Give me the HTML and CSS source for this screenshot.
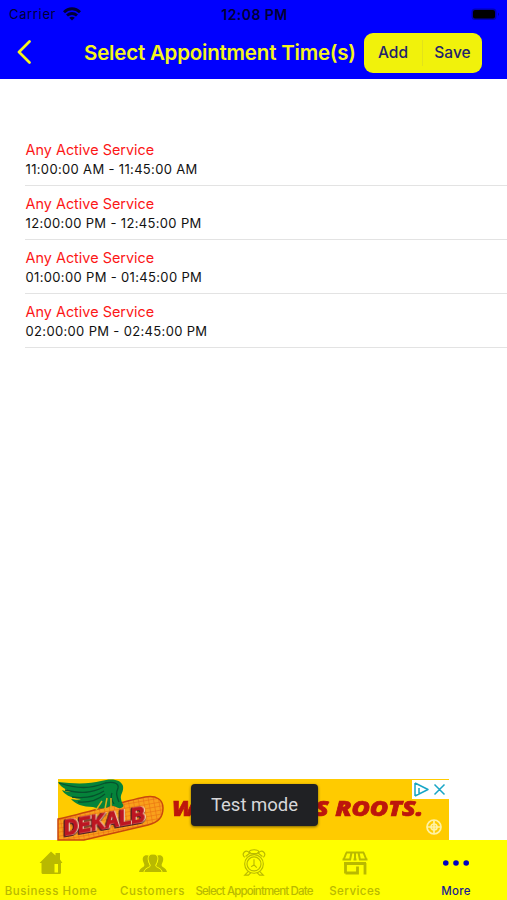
FILE: index.html
```html
<!DOCTYPE html>
<html lang="en">
<head>
<meta charset="utf-8">
<meta name="viewport" content="width=device-width">
<title>Select Appointment Time(s)</title>
<link rel="stylesheet" href="styles.css">
</head>
<body>
<header class="header">
  <div class="status">
    <div class="carrier"><span>Carrier</span>
      <svg width="18" height="14" viewBox="0 0 18 14"><g fill="none" stroke="currentColor" stroke-width="2.8"><path d="M1 5.2C5.5.6 12.500.6 17 5.200"/><path d="M4 8.500c2.800-2.700 7.200-2.700 10 0"/></g><path d="M9 13.500L6.200 10.800c1.600-1.500 4-1.500 5.600 0z" fill="currentColor"/></svg>
    </div>
    <time class="clock">12:08 PM</time>
    <svg class="battery" width="29" height="13" viewBox="0 0 29 13"><rect x=".5" y=".5" width="25" height="11.500" rx="3.500" fill="#0000b4"/><rect x="2" y="2" width="22" height="8.500" rx="2" fill="#000"/><path d="M27 4.500q2 1.700 0 3.500z" fill="#0000a0"/></svg>
  </div>
  <div class="nav">
    <button class="back" aria-label="Back"><svg width="14" height="24" viewBox="0 0 14 24"><path d="M12.500 1.500L2 12l10.500 10.500" fill="none" stroke="currentColor" stroke-width="2.700" stroke-linecap="round" stroke-linejoin="round"/></svg></button>
    <h1 class="title">Select Appointment Time(s)</h1>
    <div class="actions"><button class="add">Add</button><button class="save">Save</button></div>
  </div>
</header>
<main class="content">
  <ul class="slots">
    <li class="slot"><div class="name">Any Active Service</div><div class="time">11:00:00 AM - 11:45:00 AM</div></li>
    <li class="slot"><div class="name">Any Active Service</div><div class="time">12:00:00 PM - 12:45:00 PM</div></li>
    <li class="slot"><div class="name">Any Active Service</div><div class="time">01:00:00 PM - 01:45:00 PM</div></li>
    <li class="slot"><div class="name">Any Active Service</div><div class="time">02:00:00 PM - 02:45:00 PM</div></li>
  </ul>
</main>
<aside class="ad">
  <svg class="ad-logo" width="107" height="61" viewBox="0 0 107 61">
    <defs><pattern id="kernels" width="5" height="4" patternUnits="userSpaceOnUse" patternTransform="rotate(-10)"><rect width="5" height="4" fill="#f9a01b"/><path d="M0 0H5M0 0V4" stroke="#e8690f" stroke-width="1"/></pattern></defs>
    <path d="M0 40C28 34 63 23 87 18c12-2 18 3 18 11 0 9-4 14-15 17C68 51 48 56 26 61H0z" fill="url(#kernels)" stroke="#c9480c" stroke-width="1.500"/>
    <path d="M0 3c17 2 32 2 43-1 10-3 20-2 22 5 1 6-3 8-2 13 1 6 5 7 0 9-4 1-8-4-11-2-6 4-14 2-17 1-10 0-18-3-22-8 5 1 8 1 10 0C12 19 6 15 4 11c5 2 8 2 11 2C7 11 2 7 0 3z" fill="#05833a"/>
    <path d="M1 4c19 6 31 6 46 0M7 11c17 4 26 3 39-3M14 18c14 2 23 0 32-6M20 23c12 1 20-2 27-8M47 4c10-2 14 1 13 5-2 5-2 7 1 14M54 14c-2 4 0 8 2 11" fill="none" stroke="#06512d" stroke-width="1.300"/>
    <path d="M49 19l-2 11M53 19v10M44 22l-6 9" stroke="#d7b319" stroke-width="1.500"/>
    <text class="brand" transform="translate(6 56.500) skewY(-10)" textLength="81" lengthAdjust="spacingAndGlyphs">DEKALB</text>
  </svg>
  <span class="slogan-start">W</span>
  <span class="slogan-end">S ROOTS.</span>
  <svg class="ad-controls" width="37" height="19" viewBox="0 0 37 19"><rect width="37" height="19" fill="#fff"/><g fill="none" stroke="#19a6c6" stroke-width="1.500" stroke-linejoin="round"><path d="M3 3v13M3 3l13 6.500L3 16M7 8v6M7 5v1M22.500 4.500l10 10M32.500 4.500l-10 10"/></g></svg>
  <svg class="ad-mark" width="16" height="16" viewBox="0 0 16 16"><g fill="none" stroke="#fff2a5" stroke-width="1.700"><circle cx="8" cy="8" r="7"/><path d="M1 8h14M8 1v14"/><circle cx="8" cy="8" r="3"/></g></svg>
  <div class="toast">Test mode</div>
</aside>
<nav class="tabs">
  <a class="tab home"><svg viewBox="0 0 28 28"><path d="M2.500 14L14 2.500l4.500 4V4H23v6.500l2.500 3.500H24v9.500q0 1.500-1.500 1.500H6Q4.500 25 4.500 23.500V14zM17.500 15v8.500h3.500V15z" fill="currentColor" fill-rule="evenodd"/></svg><span>Business Home</span></a>
  <a class="tab customers"><svg viewBox="0 0 28 28"><g fill="currentColor"><path id="person" d="M9 6.500C5 5.500 3 8.500 4 12c.4 2 1.700 3 1.300 4.500C5 18.500 1 18.500 0 23h7c.5-3 3-4.500 5-5.500-3.200-3-3.300-7-1-10.500z"/><use href="#person" transform="matrix(-1 0 0 1 28 0)"/><path d="M14 5c-4.500 0-5.500 3.500-4.500 7 .4 2.100 1.800 3.300 1.700 4.800-.2 2-5.700 1.700-6.400 6.700h18.400c-.7-5-6.200-4.700-6.400-6.700-.1-1.500 1.300-2.700 1.700-4.800 1-3.500 0-7-4.500-7z" stroke="#ff0" stroke-width="1"/></g></svg><span>Customers</span></a>
  <a class="tab date"><svg viewBox="0 0 28 30"><g fill="none" stroke="currentColor" stroke-width="1.200"><circle cx="14" cy="16" r="10"/><circle cx="14" cy="16" r="7.500"/><path d="M4 9C0 5 5 0 9 4M24 9c4-4-1-9-5-5M5 8l5-4M23 8l-5-4M9 3c0-3 10-3 10 0l-2 2h-6zM8 24l-4 4h4l3-3M20 24l4 4h-4l-3-3M14 11v6l3 3M14 17l-3 2"/></g></svg><span>Select Appointment Date</span></a>
  <a class="tab services"><svg viewBox="0 0 28 28"><g fill="none" stroke="currentColor" stroke-width="2"><path d="M5 3.500h18M5.500 3.500L2.500 11M22.500 3.500l3 7.500M10.500 3.500L9 11M14 3.500V11M17.500 3.500L19 11M1.500 10.500H10M12.500 10.500h3M18 10.500h8.500"/><path d="M4.500 14v10.500M3 14.500H25M24 14v11.500M4.500 24H17M16.500 25.500v-8" stroke-width="2.800"/></g></svg><span>Services</span></a>
  <a class="tab more"><svg viewBox="0 0 28 28"><g fill="currentColor"><circle cx="3.800" cy="14" r="2.800"/><circle cx="14" cy="14" r="2.800"/><circle cx="24.200" cy="14" r="2.800"/></g></svg><span>More</span></a>
</nav>
</body>
</html>
```
FILE: styles.css
```css
* { box-sizing: border-box; }
body { margin: 0; width: 507px; height: 900px; display: flex; flex-direction: column; background: #fff; color: #111; font-family: Inter, sans-serif; overflow: hidden; }
button { padding: 0; border: 0; background: none; font: inherit; color: inherit; }
.header { height: 79px; background: #00f; flex: none; }
.status { height: 28px; display: grid; grid-template-columns: 1fr auto 1fr; align-items: center; padding: 0 7px 0 9px; color: #000035; font-size: 13px; }
.carrier { display: flex; align-items: center; gap: 7px; letter-spacing: .65px; }
.clock { font-size: 14px; font-weight: 600; letter-spacing: .45px; }
.battery { justify-self: end; }
.nav { display: flex; align-items: center; height: 48px; color: #f5f51c; padding: 0 25px 0 17px; }
.back { width: 67px; height: 24px; text-align: left; }
.back svg { display: block; }
.title { margin: 1px 0 0; width: 280px; font-size: 20.500px; font-weight: 600; letter-spacing: -.2px; white-space: nowrap; }
.actions { display: flex; flex: none; width: 118px; height: 40px; margin-top: 1px; border-radius: 9px; background: #f1f20b; color: #22226c; font-size: 15.500px; font-weight: 500; letter-spacing: 0; align-items: center; }
.add { width: 59px; height: 26px; border-right: 1px solid #e2e21b; }
.save { width: 59px; }
.content { flex: 1; padding-top: 53px; }
.slots { margin: 0; padding: 0 0 0 25px; list-style: none; }
.slot { height: 53.900px; padding: 8px 0 0 .5px; border-bottom: 1px solid #e3e3e3; }
.name { color: #fc1717; font-size: 14.400px; line-height: 19px; letter-spacing: .02px; }
.time { margin-top: 1px; font-size: 13px; line-height: 18px; letter-spacing: .34px; }
.ad { position: relative; width: 391px; height: 61px; margin-left: 58px; background: #ffcb00; flex: none; }
.ad-logo { display: block; overflow: visible; }
.brand { font: 900 22px "Liberation Sans", sans-serif; fill: #bd1622; stroke: #bd1622; stroke-width: 1.300px; filter: drop-shadow(1px 0 0 #fff0cf) drop-shadow(-1px 0 0 #4a2024) drop-shadow(0 1px 0 #4a2024); }
.slogan-start, .slogan-end { position: absolute; top: 16px; color: #bd160c; font: italic 900 21px/27px "Open Sans", sans-serif; -webkit-text-stroke: .7px #bd160c; white-space: nowrap; transform: scaleX(1.190); transform-origin: left; }
.slogan-start { left: 114px; }
.slogan-end { left: 257px; }
.ad-controls { position: absolute; right: 0; top: 1px; }
.ad-mark { position: absolute; right: 7px; bottom: 5px; }
.toast { position: absolute; left: 133px; top: 5px; width: 127px; height: 42px; display: flex; justify-content: center; align-items: center; border-radius: 4px; background: #202124; color: #d7d7d9; font: 18.500px Roboto, sans-serif; letter-spacing: 0; box-shadow: 0 1px 3px #0008; }
.tabs { height: 60px; flex: none; display: grid; grid-template-columns: 102px 101px 102px 100px 102px; background: #ff0; color: #b9b900; }
.tab { display: flex; min-width: 0; flex-direction: column; align-items: center; padding-top: 9px; font-size: 11.500px; font-weight: 500; white-space: nowrap; }
.tab svg { width: 28px; height: 28px; flex: none; }
.tab span { line-height: 16px; margin-top: 6px; letter-spacing: .58px; }
.date span { letter-spacing: -.85px; }
.services span { letter-spacing: .45px; }
.more { color: #0000c2; }
.more span { letter-spacing: .3px; color: #191991; }
```
